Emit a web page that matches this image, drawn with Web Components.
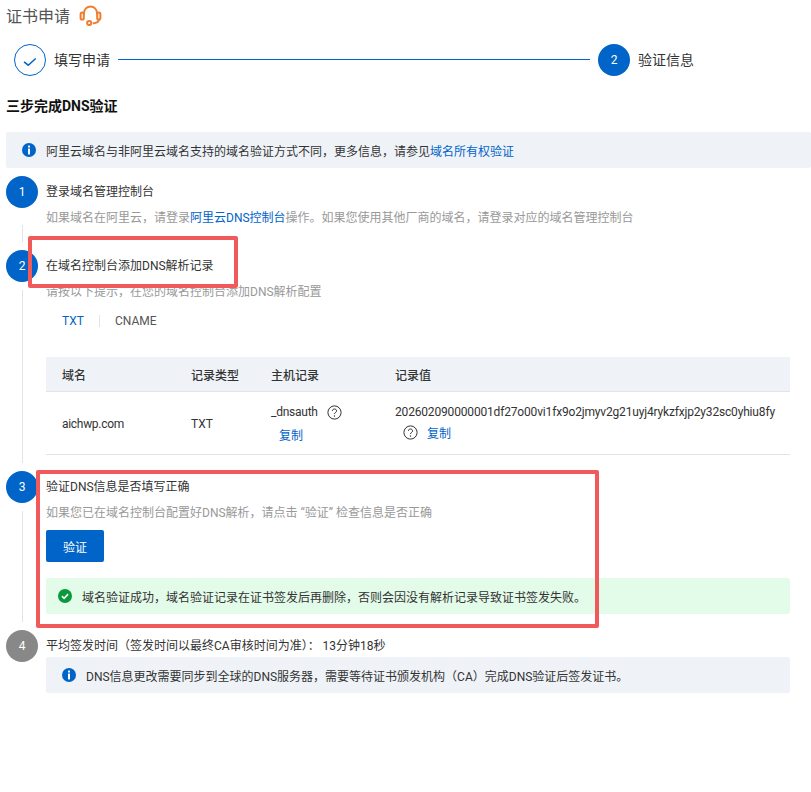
<!DOCTYPE html>
<html lang="zh-CN"><head><meta charset="utf-8"><title>证书申请</title>
<style>
html,body{margin:0;background:#fff}
body{font-family:Roboto,"Noto Sans CJK SC",sans-serif;font-size:12px;color:#333}
a{color:#0064c8;text-decoration:none}
</style></head><body>
<cert-page>
  <page-title>证书申请</page-title>
  <wizard-steps></wizard-steps>
  <section-heading>三步完成DNS验证</section-heading>
  <note-alert style="--ml:6px;--gap:10px;--pl:16px;--width:805px;--mt:16px;--mb:8px">阿里云域名与非阿里云域名支持的域名验证方式不同，更多信息，请参见<a href="#" style="color:#0064c8">域名所有权验证</a></note-alert>
  <dns-step num="1" h="74" line-top="17">
    <span slot="title">登录域名管理控制台</span>
    <span slot="desc">如果域名在阿里云，请登录<a href="#" style="color:#0064c8">阿里云DNS控制台</a>操作。如果您使用其他厂商的域名，请登录对应的域名管理控制台</span>
  </dns-step>
  <dns-step num="2" h="221">
    <span slot="title">在域名控制台添加DNS解析记录</span>
    <span slot="desc">请按以下提示，在您的域名控制台添加DNS解析配置</span>
    <record-tabs></record-tabs>
    <record-table></record-table>
  </dns-step>
  <dns-step num="3" h="159">
    <span slot="title">验证DNS信息是否填写正确</span>
    <span slot="desc">如果您已在域名控制台配置好DNS解析，请点击 “验证” 检查信息是否正确</span>
    <verify-button>验证</verify-button>
    <note-alert kind="success" style="--width:744px;--mt:16px;--pl:12px;--gap:10px">域名验证成功，域名验证记录在证书签发后再删除，否则会因没有解析记录导致证书签发失败。</note-alert>
  </dns-step>
  <dns-step num="4" h="63" muted nodesc last>
    <span slot="title">平均签发时间（签发时间以最终CA审核时间为准）： 13分钟18秒</span>
    <note-alert style="--width:744px;--mt:1px;--pl:16px;--gap:10px">DNS信息更改需要同步到全球的DNS服务器，需要等待证书颁发机构（CA）完成DNS验证后签发证书。</note-alert>
  </dns-step>
  <mark-box style="left:28px;top:236px;width:210px;height:52px"></mark-box>
  <mark-box style="left:36px;top:470px;width:563px;height:158px"></mark-box>
</cert-page>
<script>
const tpl=(html)=>{const t=document.createElement('template');t.innerHTML=html;return t};
const def=(name,html,extra)=>{const t=tpl(html);customElements.define(name,class extends HTMLElement{
  constructor(){super();this.attachShadow({mode:'open'}).appendChild(t.content.cloneNode(true));}
  connectedCallback(){extra&&extra.call(this)}
})};
const INFO=`<svg width="14" height="14" viewBox="0 0 14 14"><circle cx="7" cy="7" r="7" fill="#0064c8"/><rect x="6" y="2.6" width="2" height="2" rx=".4" fill="#fff"/><rect x="6" y="5.6" width="2" height="5.8" rx=".3" fill="#fff"/></svg>`;
const OK=`<svg width="14" height="14" viewBox="0 0 14 14"><circle cx="7" cy="7" r="7" fill="#0a9a3c"/><path d="M3.9 7.2l2.2 2.1 4-4.2" fill="none" stroke="#fff" stroke-width="1.6"/></svg>`;
const HELP=`<svg width="15" height="15" viewBox="0 0 15 15"><circle cx="7.5" cy="7.5" r="6.6" fill="none" stroke="#333" stroke-width="1"/><path d="M5.4 6c0-1.3 1-2 2.1-2s2.1.7 2.1 1.9c0 1.5-2.1 1.5-2.1 3.1" fill="none" stroke="#333" stroke-width="1"/><circle cx="7.5" cy="11" r=".7" fill="#333"/></svg>`;
def('cert-page',`<style>:host{display:block;position:relative;width:811px;height:792px;overflow:hidden;box-sizing:border-box}</style><slot></slot>`);
def('page-title',`<style>:host{display:flex;align-items:center;height:32px;padding-left:6px;font-size:16px;color:#555;gap:9px}span{margin-top:-2px}svg{display:block;margin-top:-1px}</style><span><slot></slot></span>
<svg width="23" height="21" viewBox="0 0 23 21" fill="none" stroke="#ed7d31" stroke-width="2"><path d="M5 9.5V8a6.5 6.5 0 0 1 13 0v1.5"/><rect x="1.6" y="7.6" width="3.2" height="7" rx="1.6"/><rect x="18.2" y="7.6" width="3.2" height="7" rx="1.6"/><path d="M19.8 14.6c0 2.4-2.6 3.6-6 3.8"/><circle cx="10.2" cy="18" r="2.1"/></svg>`);
def('wizard-steps',`<style>:host{display:flex;align-items:center;height:32px;margin-top:12px;padding-left:14px;color:#333;font-size:14px}
.c{width:32px;height:32px;border-radius:50%;box-sizing:border-box;display:flex;align-items:center;justify-content:center;flex:none}
.a{border:1px solid #0064c8}.b{background:#0064c8;color:#fff;font-size:12px}
.t{margin-left:8px;line-height:20px;white-space:nowrap}
.l{height:0;border-top:1px solid #0064c8;width:472px;margin:-1px 8px 0 8px}</style>
<span class="c a"><svg width="14" height="12" viewBox="0 0 14 12" style="margin-top:1px"><path d="M1 6.9L5.3 10.2 12.7 3.5" fill="none" stroke="#0064c8" stroke-width="1.5"/></svg></span><span class="t">填写申请</span><span class="l"></span><span class="c b">2</span><span class="t">验证信息</span>`);
def('section-heading',`<style>:host{display:block;margin-top:20px;padding-left:6px;font-size:14px;line-height:20px;font-weight:700;color:#111}</style><slot></slot>`);
def('note-alert',`<style>:host{display:flex;align-items:center;box-sizing:border-box;height:36px;width:var(--width);margin-left:var(--ml,0);margin-top:var(--mt,0);margin-bottom:var(--mb,0);padding-left:var(--pl);gap:var(--gap);background:#eff3f8;border-radius:2px;color:#333;font-size:12px}
:host([kind=success]){background:#e3fbe9}
svg{display:block;flex:none}#i{display:flex}</style><span id="i"></span><span><slot></slot></span>`,function(){this.shadowRoot.getElementById('i').innerHTML=this.getAttribute('kind')==='success'?OK:INFO});
def('dns-step',`<style>:host{display:grid;grid-template-columns:40px 1fr;box-sizing:border-box;margin-left:6px;width:784px}
.side{display:flex;flex-direction:column;align-items:flex-start}
.n{width:32px;height:32px;border-radius:50%;background:#0064c8;color:#fff;display:flex;align-items:center;justify-content:center;font-size:12px;flex:none}
:host([muted]) .n{background:#888}
.line{flex:1;width:1px;background:#e3e4e6;margin:8px 0 8px 16px}
:host([last]) .line{display:none}
.body{padding-top:6px;min-width:0}
.title{line-height:20px;color:#333}
.desc{line-height:20px;margin-top:6px;color:#999;white-space:nowrap}
:host([nodesc]) .desc{display:none}</style>
<div class="side"><div class="n" id="n"></div><div class="line" id="l"></div></div>
<div class="body"><div class="title"><slot name="title"></slot></div><div class="desc"><slot name="desc"></slot></div><slot></slot></div>`,function(){
  const s=this.shadowRoot;s.getElementById('n').textContent=this.getAttribute('num');
  this.style.height=this.getAttribute('h')+'px';
  if(this.hasAttribute('line-top'))s.getElementById('l').style.marginTop=this.getAttribute('line-top')+'px';
});
def('record-tabs',`<style>:host{display:flex;align-items:center;height:20px;margin-top:9px;padding-left:16px;color:#555}
.a{color:#0064c8;width:21px}.s{width:1px;height:12px;background:#e3e4e6;margin:0 15px 0 16px}</style><span class="a">TXT</span><span class="s"></span><span>CNAME</span>`);
def('copy-link',`<style>:host{color:#0064c8;cursor:pointer}</style><slot></slot>`);
def('record-table',`<style>:host{display:block;margin-top:26px;width:744px;color:#333}
.r{display:grid;grid-template-columns:129px 80px 124px 1fr;padding-left:16px;box-sizing:border-box}
.h{height:35px;background:#eff3f8;border-bottom:1px solid #e3e4e6;align-items:center;font-weight:500}
.b{height:63px;border-bottom:1px solid #e3e4e6;align-items:center}
.cell{display:flex;flex-direction:column;white-space:nowrap;height:63px;box-sizing:border-box}
.l1{display:flex;align-items:center;height:20px;margin-top:10px;gap:9px}
svg{display:block}
.c1{margin:4px 0 0 8px;line-height:20px}
.l2{display:flex;align-items:center;height:20px;padding-left:8px;gap:9px}
.v{margin-top:10px;line-height:20px;letter-spacing:-.17px}
.dom{letter-spacing:-.3px}.host{letter-spacing:-.25px}
</style>
<div class="r h"><span>域名</span><span>记录类型</span><span>主机记录</span><span>记录值</span></div>
<div class="r b"><span class="dom">aichwp.com</span><span>TXT</span>
<div class="cell"><div class="l1"><span class="host">_dnsauth</span>${HELP}</div><div class="c1"><copy-link>复制</copy-link></div></div>
<div class="cell"><div class="v">202602090000001df27o00vi1fx9o2jmyv2g21uyj4rykzfxjp2y32sc0yhiu8fy</div><div class="l2">${HELP}<copy-link>复制</copy-link></div></div></div>`);
def('verify-button',`<style>:host{display:flex;align-items:center;justify-content:center;width:58px;height:32px;margin-top:7px;background:#0064c8;color:#fff;border-radius:2px;font-size:12px;cursor:pointer}</style><slot></slot>`);
def('mark-box',`<style>:host{position:absolute;box-sizing:border-box;border:4px solid #f05a5a;border-radius:2px;pointer-events:none}</style>`);
</script>
</body></html>
